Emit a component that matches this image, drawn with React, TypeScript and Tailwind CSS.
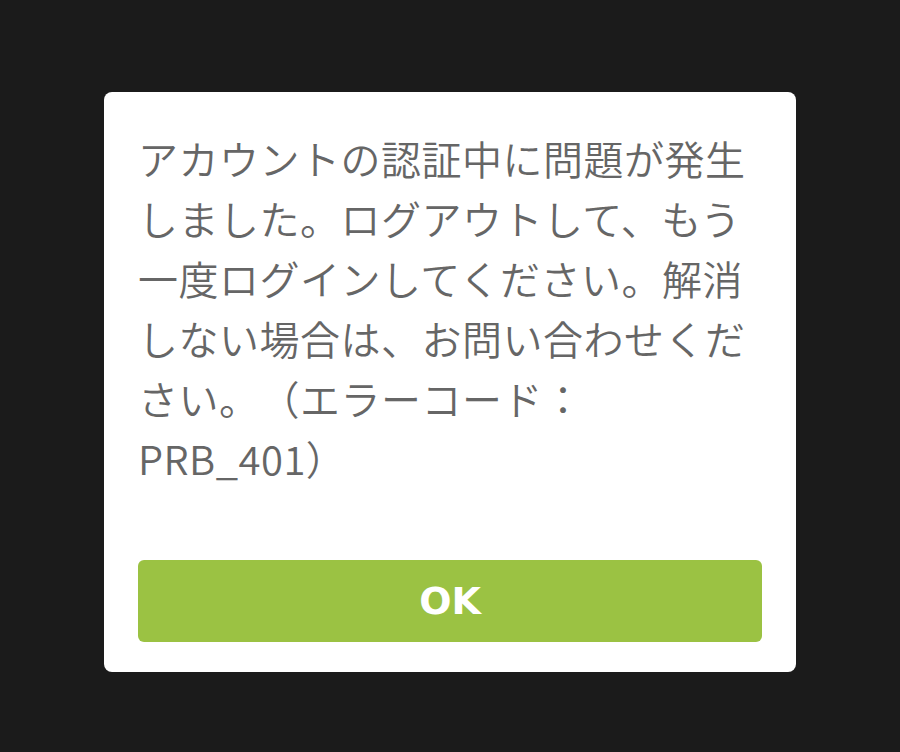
export default function App() {
  return (
    <div className="w-[900px] h-[752px] bg-[#1b1b1b] flex justify-center pt-[92px]">
      <div className="w-[692px] h-[580px] bg-white rounded-[8px] pt-[36px] px-[34px] pb-[30px] flex flex-col">
        <p
          className="text-[40px] leading-[60px] text-[#666666] font-[350] tracking-[0.5px] [text-spacing-trim:space-all] whitespace-nowrap"
          style={{ fontFamily: '"Noto Sans CJK JP", "Noto Sans", sans-serif' }}
        >
          アカウントの認証中に問題が発生
          <br />
          しました。ログアウトして、もう
          <br />
          一度ログインしてください。解消
          <br />
          しない場合は、お問い合わせくだ
          <br />
          さい。（エラーコード：
          <br />
          PRB_401）
        </p>
        <button
          className="mt-[72px] h-[82px] w-full rounded-[6px] bg-[#9bc243] text-white text-[38px] font-bold"
          style={{ fontFamily: '"DejaVu Sans", Verdana, sans-serif' }}
        >
          OK
        </button>
      </div>
    </div>
  );
}
